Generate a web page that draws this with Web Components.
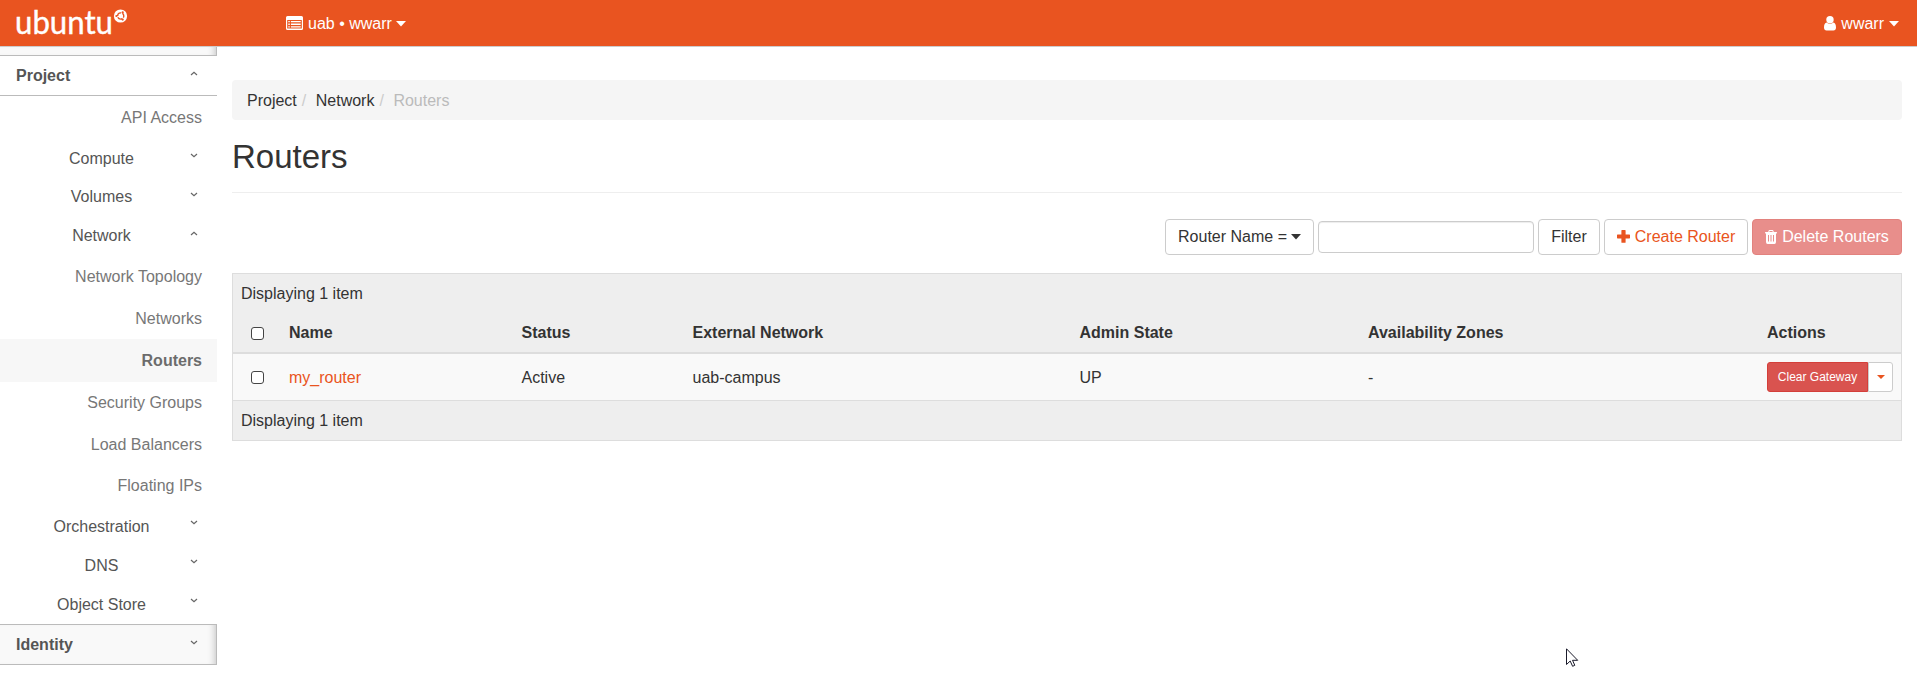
<!DOCTYPE html>
<html lang="en">
<head>
<meta charset="utf-8">
<title>Routers</title>
<style>
html, body { margin: 0; height: 100%; background: #fff; }
body { font: 16px/24px "Liberation Sans", Arial, sans-serif; color: #333; overflow: hidden; }
</style>
</head>
<body>
<horizon-app></horizon-app>
<script>
const define = (name, html) => customElements.define(name, class extends HTMLElement {
  connectedCallback() {
    if (this.shadowRoot) return;
    const root = this.attachShadow({ mode: 'open' });
    const t = document.createElement('template');
    t.innerHTML = typeof html === 'function' ? html(this) : html;
    root.append(t.content.cloneNode(true));
  }
});

define('caret-down', `<style>:host{display:inline-block;flex:none;width:10px;height:6px}svg{display:block}</style>
<svg width="10" height="6" viewBox="0 0 10 6"><path d="M0 0h10L5 5.600z" fill="currentColor"/></svg>`);

define('ubuntu-logo', `<style>:host{display:block;width:116px;height:46px}svg{display:block}
text{font-family:Lato,"Open Sans",sans-serif;font-size:33.500px;line-height:46px;fill:#fff;stroke:#fff;stroke-width:.4px}</style>
<svg width="116" height="46" viewBox="0 0 116 46">
<text x="-1" y="33.600" textLength="98" lengthAdjust="spacingAndGlyphs">ubuntu</text>
<circle cx="104.500" cy="16" r="6.600" fill="#fff"/>
<circle cx="104.700" cy="16" r="3.100" fill="none" stroke="#e95420" stroke-width="1.400" stroke-dasharray="5.200 1.300" stroke-dashoffset="-3"/>
<g fill="#e95420"><circle cx="100.400" cy="16" r="1.100"/><circle cx="106.700" cy="12.400" r="1.100"/><circle cx="106.700" cy="19.600" r="1.100"/></g>
</svg>`);

define('top-bar', `<style>
:host{display:flex;height:46px;background:#e95420;border-bottom:1px solid #ccc;color:#fff;align-items:center;box-sizing:content-box}
ubuntu-logo{margin-left:16px}
.ctx{display:flex;align-items:center;margin-left:154px}
.user{display:flex;align-items:center;margin-left:auto;margin-right:18px}
span{padding-top:2px}
.ctx svg,.user svg{margin-right:5px}caret-down{margin-left:5px;margin-top:2px}
.ctx caret-down{margin-left:4px}
</style>
<ubuntu-logo></ubuntu-logo>
<div class="ctx"><svg width="17" height="14" viewBox="0 0 17 14"><path fill="#fff" fill-rule="evenodd" d="M1.500 0h14A1.500 1.500 0 0 1 17 1.500v11a1.500 1.500 0 0 1-1.500 1.500h-14A1.500 1.500 0 0 1 0 12.500v-11A1.500 1.500 0 0 1 1.500 0zM1.200 4v8.500h14.600V4z"/><path fill="#fff" d="M2.300 5h1.500v1.300H2.300zM2.300 7.600h1.500v1.300H2.300zM2.300 10.200h1.500v1.300H2.300zM4.900 5h9.800v1.300H4.900zM4.900 7.600h9.800v1.300H4.900zM4.900 10.200h9.800v1.300H4.900z"/></svg><span>uab • wwarr</span><caret-down></caret-down></div>
<div class="user"><svg width="12" height="15" viewBox="0 0 12 15"><path fill="#fff" d="M2.600 6.600C1 7 0 8.500 0 11.600 0 13.500 1 14.600 2.500 14.600h7c1.500 0 2.500-1.100 2.500-3C12 8.500 11 7 9.400 6.600A4.900 4.900 0 0 1 6 8 4.900 4.900 0 0 1 2.600 6.600z"/><circle cx="6" cy="3.700" r="3.700" fill="#fff"/></svg><span>wwarr</span><caret-down></caret-down></div>`);

define('nav-chevron', el => `<style>:host{display:block;width:8px;height:5px;flex:none}svg{display:block}</style>
<svg width="8" height="5" viewBox="0 0 8 5"><path d="${el.hasAttribute('up') ? 'M1 4L4 1.300L7 4' : 'M1 1L4 3.700L7 1'}" fill="none" stroke="#666" stroke-width="1.200"/></svg>`);

define('nav-panel', el => `<style>
:host{display:flex;box-sizing:border-box;height:41px;align-items:center;padding:0 19px 0 16px;border-top:1px solid #bbb;border-bottom:1px solid #bbb;font-weight:bold;color:#555}
:host([closed]){background:#f9f9f9;border-right:1px solid #bbb;padding-right:18px;box-shadow:inset -7px 0 6px -5px #ccc}
span{flex:1}nav-chevron{margin-bottom:5px}
</style><span><slot></slot></span><nav-chevron ${el.hasAttribute('closed') ? '' : 'up'}></nav-chevron>`);

define('nav-group', el => `<style>
:host{display:flex;box-sizing:border-box;height:39px;align-items:center;padding:0 19px 0 16px;gap:3px;color:#555}
span{flex:1;text-align:center}nav-chevron{margin-bottom:5px}
:host([first]) span{padding-top:2px}
:host([low]) nav-chevron{margin-bottom:8px}
</style><span><slot></slot></span><nav-chevron ${el.hasAttribute('up') ? 'up' : ''}></nav-chevron>`);

define('nav-item', `<style>
:host{display:block;box-sizing:border-box;height:42px;line-height:42px;padding:1px 15px 0 0;text-align:right;color:#777}
:host([active]){height:43px;line-height:43px;padding-top:0;margin-bottom:-1px;background:#f7f7f7;font-weight:bold;color:#6c6c6c}
:host([last]){padding-top:0}
</style><slot></slot>`);

define('side-nav', `<style>
:host{display:block;width:217px;flex:none}
.strip{box-sizing:border-box;height:8px;background:#f9f9f9;border-right:1px solid #bbb;box-shadow:inset -7px 0 6px -5px #ccc}
</style><div class="strip"></div>
<nav-panel>Project</nav-panel>
<nav-item>API Access</nav-item>
<nav-group first>Compute</nav-group><nav-group>Volumes</nav-group><nav-group up>Network</nav-group>
<nav-item>Network Topology</nav-item><nav-item>Networks</nav-item><nav-item active>Routers</nav-item>
<nav-item>Security Groups</nav-item><nav-item>Load Balancers</nav-item><nav-item last>Floating IPs</nav-item>
<nav-group low>Orchestration</nav-group><nav-group low>DNS</nav-group><nav-group low>Object Store</nav-group>
<nav-panel closed>Identity</nav-panel>`);

define('bread-crumb', `<style>
:host{display:flex;box-sizing:border-box;height:40px;align-items:center;padding:2px 15px 0;background:#f5f5f5;border-radius:4px}
i{font-style:normal;color:#ccc;padding:0 9.500px 0 5px}.last{color:#bbb}
</style><span>Project</span><i>/</i><span>Network</span><i>/</i><span class="last">Routers</span>`);

define('h-button', `<style>
:host{display:flex;box-sizing:border-box;height:36px;align-items:center;justify-content:center;border:1px solid #ccc;border-radius:4px;background:#fff;white-space:nowrap}
:host([kind=create]){color:#e95420}
:host([kind=danger]){color:#fff;background:#e88e8b;border-color:#e2827e}
</style><slot></slot>`);

define('tool-bar', `<style>
:host{display:flex;justify-content:flex-end;align-items:center;gap:4px;height:36px}
.f{width:149px}.t{width:62px}.c{width:144px}.d{width:150px}
input{box-sizing:border-box;width:216px;height:32px;margin:0;border:1px solid #ccc;border-radius:4px;background:#fff;box-shadow:inset 0 1px 1px rgba(0,0,0,.075)}
caret-down{margin-left:4px}svg{margin-right:5px;flex:none}.c svg{margin-top:-2px}
</style>
<h-button class="f"><span>Router Name =</span><caret-down></caret-down></h-button><input type="text" aria-label="Search">
<h-button class="t">Filter</h-button>
<h-button class="c" kind="create"><svg width="13" height="13" viewBox="0 0 13 13"><path fill="#e95420" d="M5 0h3q.6 0 .6.600V4.400h3.800q.6 0 .6.600v2.800q0 .6-.6.600H8.600v3.800q0 .6-.6.600H5q-.6 0-.6-.6V8.400H.6Q0 8.400 0 7.800V5q0-.6.6-.6h3.800V.6Q4.400 0 5 0z"/></svg>Create Router</h-button>
<h-button class="d" kind="danger"><svg width="12" height="14" viewBox="0 0 12 14"><path fill="#fff" fill-rule="evenodd" d="M4.500 0h3q.7 0 .9.700L8.800 2H11.600q.4 0 .4.400v.6q0 .4-.4.400H11v8.600q0 2-1.600 2H2.600Q1 14 1 12V3.400H.4Q0 3.400 0 3v-.6Q0 2 .4 2H3.200L3.600.7Q3.800 0 4.500 0zM4.300 2h3.400L7.400 1H4.600zM3 5v6.500h1V5zM5.500 5v6.500h1V5zM8 5v6.500h1V5z"/></svg>Delete Routers</h-button>`);

define('check-box', `<style>:host{display:block;box-sizing:border-box;width:13px;height:13px;border:1px solid #444;border-radius:3px;background:#fff}</style>`);

define('row-actions', `<style>
:host{display:flex;height:30px;font-size:12px;line-height:28px}
.a{box-sizing:border-box;width:101px;border:1px solid #d43f3a;background:#d9534f;color:#fff;border-radius:3px 0 0 3px;text-align:center}
.b{box-sizing:border-box;width:25px;border:1px solid #ccc;background:#fff;border-radius:0 3px 3px 0;display:flex;align-items:center;justify-content:center;color:#e95420}
svg{display:block}
</style><div class="a">Clear Gateway</div><div class="b"><svg width="8" height="4" viewBox="0 0 8 4"><path d="M0 0h8L4 4z" fill="currentColor"/></svg></div>`);

define('router-table', `<style>
:host{display:block;box-sizing:border-box;height:168px;border:1px solid #ddd;background:#eee}
.cap{height:39px;line-height:39px;padding-left:8px}
.row{display:grid;box-sizing:border-box;grid-template-columns:39px 232.500px 171px 387px 288.500px 399px 1fr;align-items:center;padding-left:17px}
.head{height:41px;border-bottom:2px solid #ddd;font-weight:bold}
.body{height:47px;background:#f9f9f9;border-bottom:1px solid #ddd}
a{color:#e95420}check-box{margin:2px 0 0 .5px}
.body check-box{margin-top:1px}
.body>span,.body>a{padding-top:2px}
</style>
<div class="cap">Displaying 1 item</div>
<div class="row head"><check-box></check-box><span>Name</span><span>Status</span><span>External Network</span><span>Admin State</span><span>Availability Zones</span><span>Actions</span></div>
<div class="row body"><check-box></check-box><a>my_router</a><span>Active</span><span>uab-campus</span><span>UP</span><span>-</span><row-actions></row-actions></div>
<div class="cap">Displaying 1 item</div>`);

define('mouse-pointer', `<style>:host{position:absolute;left:1566px;top:648px}svg{display:block}</style>
<svg width="13" height="20" viewBox="0 0 13 20"><path d="M.5.800V16.500L4.200 13l2.400 5.300 2.200-1-2.300-5H11.700z" fill="#fff" stroke="#1a1a2a"/></svg>`);

define('horizon-app', `<style>
:host{display:block}.main{display:flex}
.content{flex:1;padding:33px 15px 0}
h1{box-sizing:border-box;margin:18px 0 0;padding-top:1px;height:55px;line-height:36px;font-size:33px;font-weight:400;border-bottom:1px solid #eee}
tool-bar{margin:26px 0 18px}
</style>
<top-bar></top-bar>
<div class="main"><side-nav></side-nav>
<div class="content"><bread-crumb></bread-crumb><h1>Routers</h1><tool-bar></tool-bar><router-table></router-table></div></div>
<mouse-pointer></mouse-pointer>`);
</script>
</body>
</html>
